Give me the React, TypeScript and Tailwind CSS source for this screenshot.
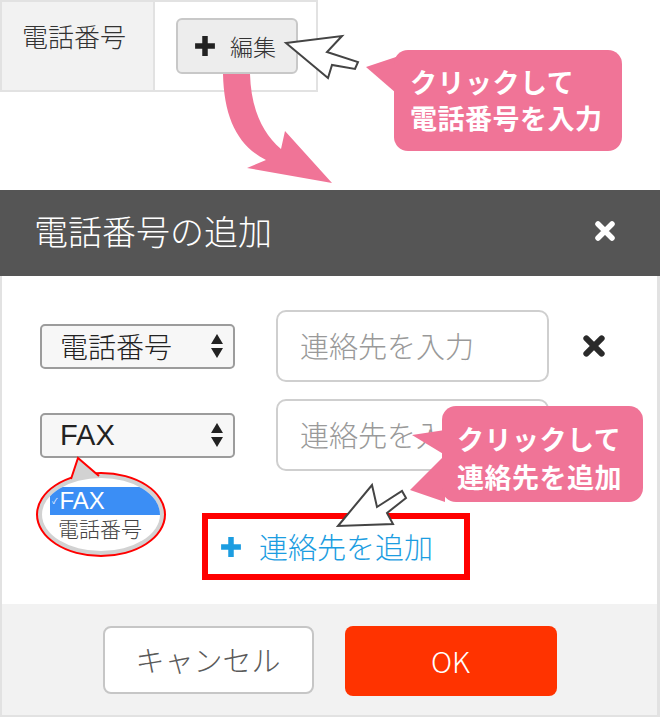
import React from "react";

const jp = "font-['Noto_Sans_CJK_JP','Noto_Sans',sans-serif]";

function TimesIcon({ color, size }: { color: string; size: number }) {
  return (
    <svg width={size} height={size} viewBox="0 0 22 22">
      <path d="M4 4 L18 18 M18 4 L4 18" stroke={color} strokeWidth="5.5" strokeLinecap="round" />
    </svg>
  );
}

function PlusIcon({ color, size }: { color: string; size: number }) {
  return (
    <svg width={size} height={size} viewBox="0 0 20 20">
      <path d="M10 1 V19 M1 10 H19" stroke={color} strokeWidth="5" />
    </svg>
  );
}

function SelectBox({ label, latin }: { label: string; latin?: boolean }) {
  return (
    <div className="flex h-[45px] w-[195px] items-center justify-between rounded-[5px] border-2 border-[#9c9c9c] bg-[#f7f7f7] pl-[18px] pr-[10px]">
      <span
        className={
          latin
            ? "font-['Liberation_Sans',sans-serif] text-[29px] leading-none text-[#222]"
            : "text-[28px] font-light leading-none text-[#222]"
        }
      >
        {label}
      </span>
      <svg width="12" height="26" viewBox="0 0 12 26">
        <path d="M6 1 L12 11 H0 Z" fill="#222" />
        <path d="M0 15 H12 L6 25 Z" fill="#222" />
      </svg>
    </div>
  );
}

function ContactRow({ label, latin }: { label: string; latin?: boolean }) {
  return (
    <div className="flex items-center">
      <SelectBox label={label} latin={latin} />
      <div className="ml-[41px] flex h-[72px] w-[273px] items-center rounded-[10px] border-2 border-[#cfcfcf] pl-[22px] text-[29px] font-light text-[#999]">
        連絡先を入力
      </div>
      <div className="ml-[33px]">
        <TimesIcon color="#2a2a2a" size={24} />
      </div>
    </div>
  );
}

export default function App() {
  return (
    <div className={`relative h-[717px] w-[660px] overflow-hidden bg-white ${jp}`}>
      {/* 元の表 */}
      <div className="h-[190px]">
        <div className="flex h-[92px] w-[318px] border-2 border-[#e2e2e2]">
          <div className="w-[153px] border-r-2 border-[#e2e2e2] bg-[#f2f2f2] pl-[20px] pt-[18px] text-[26px] font-light leading-[32px] text-[#333]">
            電話番号
          </div>
          <div className="flex-1 pl-[21px] pt-[16px]">
            <div className="flex h-[56px] w-[122px] items-center rounded-[6px] border-2 border-[#c8c8c8] bg-[#ededed] pl-[16px]">
              <PlusIcon color="#222" size={22} />
              <span className="ml-[14px] text-[23px] font-light leading-none text-[#333]">編集</span>
            </div>
          </div>
        </div>
      </div>

      {/* ダイアログ */}
      <div className="flex h-[86px] items-center justify-between bg-[#555555] pb-[4px] pl-[34px] pr-[44px]">
        <span className="text-[34px] font-light leading-none text-white">電話番号の追加</span>
        <TimesIcon color="#ffffff" size={22} />
      </div>
      <div className="h-[328px] border-l-2 border-r-[3px] border-[#e2e2e2] pl-[38px] pt-[34px]">
        <ContactRow label="電話番号" />
        <div className="mt-[17px]">
          <ContactRow label="FAX" latin />
        </div>
        <div className="ml-[162px] mt-[42px] flex h-[67px] w-[268px] items-center border-[6px] border-[#ff0000] pl-[12px]">
          <PlusIcon color="#1c9de1" size={22} />
          <span className="ml-[17px] text-[29px] font-light leading-none text-[#1c9de1]">連絡先を追加</span>
        </div>
      </div>
      <div className="flex h-[113px] justify-center gap-[31px] border-b-2 border-l-2 border-r-[3px] border-[#e2e2e2] bg-[#f2f2f2] pt-[22px]">
        <div className="flex h-[68px] w-[211px] items-center justify-center rounded-[8px] border-2 border-[#c6c6c6] bg-white text-[29px] font-light text-[#5a5a5a]">
          キャンセル
        </div>
        <div className="flex h-[70px] w-[212px] items-center justify-center rounded-[8px] bg-[#ff3300] text-[29px] font-light text-white">
          OK
        </div>
      </div>

      {/* 注釈 */}
      <svg className="pointer-events-none absolute left-0 top-0" width="660" height="717" viewBox="0 0 660 717">
        <path
          d="M223 74 C224 118 238 146 266 160 L247 168 L332 183 L285 131 L281 149 C262 133 251 108 250 74 Z"
          fill="#f07497"
        />
        <polygon points="366,67 396,57 396,93" fill="#f07497" />
        <polygon points="445,430 412,435 445,455 410,490 445,502" fill="#f07497" />
        <polygon
          points="286,43 342,36 327,52 358,62 355,69 332,65 328,78"
          fill="#ffffff"
          stroke="#444"
          strokeWidth="2"
          strokeLinejoin="miter"
        />
        <polygon
          points="338,526 372,485 377,507 402,491 406,498 387,513 393,524"
          fill="#ffffff"
          stroke="#444"
          strokeWidth="2"
          strokeLinejoin="miter"
        />
      </svg>

      <div className="absolute left-[394px] top-[50px] h-[101px] w-[228px] rounded-[14px] bg-[#f07497] pl-[16px] pt-[14px] text-[27px] font-bold leading-[36px] tracking-[0.5px] text-white">
        <div>クリックして</div>
        <div>電話番号を入力</div>
      </div>
      <div className="absolute left-[442px] top-[406px] h-[96px] w-[201px] rounded-[14px] bg-[#f07497] pl-[15px] pt-[14px] text-[27px] font-bold leading-[38px] tracking-[0.5px] text-white">
        <div>クリックして</div>
        <div>連絡先を追加</div>
      </div>

      {/* 選択肢の拡大 */}
      <div className="absolute left-[36px] top-[472px] h-[85px] w-[130px] rounded-[50%] border-2 border-[#ff0000] bg-[#d2d2d2] p-[4px]">
        <div className="h-full w-full overflow-hidden rounded-[50%] bg-white pl-[8px] pt-[9px]">
          <div className="flex h-[28px] items-center bg-[#3b8ef5] pl-[2px] text-white">
            <span className="text-[8px] leading-none">✓</span>
            <span className="ml-[2px] font-['Liberation_Sans',sans-serif] text-[24px] leading-none">FAX</span>
          </div>
          <div className="flex h-[26px] items-center pl-[8px] text-[21px] font-light leading-none text-[#444]">電話番号</div>
        </div>
      </div>
      <svg className="pointer-events-none absolute left-0 top-0" width="660" height="717" viewBox="0 0 660 717">
        <polygon points="71,480 78,458 99,477" fill="#d2d2d2" />
        <polyline points="71,479 78,458 99,476" fill="none" stroke="#ff0000" strokeWidth="2" />
      </svg>
    </div>
  );
}
